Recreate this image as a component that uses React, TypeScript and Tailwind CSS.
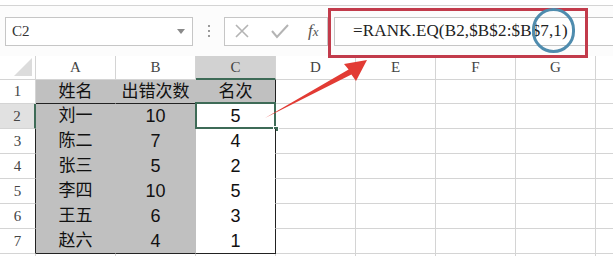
const ROWS = [
  ['姓名', '出错次数', '名次'],
  ['刘一', '10', '5'],
  ['陈二', '7', '4'],
  ['张三', '5', '2'],
  ['李四', '10', '5'],
  ['王五', '6', '3'],
  ['赵六', '4', '1'],
]

const COLS = ['A', 'B', 'C', 'D', 'E', 'F', 'G']

const serif = "font-['Liberation_Serif',serif]"
const cjk = "font-['Liberation_Sans','Noto_Sans_CJK_SC',sans-serif]"

function RowHeader({ n }: { n?: number }) {
  const selected = n === 2
  const edge = n !== undefined && n >= 3 && n <= 7
  return (
    <div
      className={`flex items-center justify-center border-b border-[#d4d4d4] text-[15px] text-[#444] ${serif} ${
        selected
          ? 'border-r-2 border-r-[#3e6b57] bg-[#e1e1e1]'
          : edge
            ? 'border-r border-r-[#222] bg-white'
            : 'border-r border-r-[#d4d4d4] bg-white'
      }`}
    >
      {n}
    </div>
  )
}

function DataCell({ row, col, text }: { row: number; col: number; text: string }) {
  const isText = row === 1 || col === 0
  const font = isText ? `${cjk} text-[17px]` : "font-['Liberation_Sans',sans-serif] text-[18px]"

  if (col === 2) {
    // rank column: white fill, dark outline on the right
    const bg = row === 1 ? 'bg-[#c0c0c0] border-b-[#c0c0c0]' : row === 7 ? 'bg-white border-b-[#222]' : 'bg-white border-b-white'
    return (
      <div className={`relative flex items-center justify-center border-r border-b border-r-[#222] text-[#111] ${bg} ${font}`}>
        {text}
        {row === 2 && (
          <>
            <div className="absolute -top-[2px] -left-[1px] -right-[1px] -bottom-[1px] border-2 border-[#3e6b57]" />
            <div className="absolute -right-[4px] -bottom-[4px] h-[6px] w-[6px] border border-white bg-[#3e6b57]" />
          </>
        )}
      </div>
    )
  }

  const bottom = row === 1 || row === 7 ? 'border-b-[#222]' : 'border-b-[#c0c0c0]'
  return (
    <div className={`flex items-center justify-center border-r border-b border-r-[#c0c0c0] bg-[#c0c0c0] text-[#111] ${bottom} ${font}`}>
      {text}
    </div>
  )
}

function EmptyCell({ last }: { last?: boolean }) {
  return <div className={`border-b border-[#d4d4d4] bg-white ${last ? '' : 'border-r'}`} />
}

function Toolbar() {
  return (
    <div className="flex h-[50px] items-center bg-[#fcfcfc] pl-[5px]">
      {/* name box */}
      <div className={`flex h-[29px] w-[188px] shrink-0 items-center justify-between border border-[#c6c6c6] bg-white pl-[6px] pr-[7px] text-[15px] text-[#333] ${serif}`}>
        <span>C2</span>
        <svg width="8" height="5" viewBox="0 0 8 5">
          <path d="M0 0h8L4 5z" fill="#8a8a8a" />
        </svg>
      </div>
      <div className="flex w-[31px] shrink-0 flex-col items-center gap-[3px]">
        <span className="h-[2px] w-[2px] bg-[#9a9a9a]" />
        <span className="h-[2px] w-[2px] bg-[#9a9a9a]" />
        <span className="h-[2px] w-[2px] bg-[#9a9a9a]" />
      </div>
      {/* cancel / enter / insert function */}
      <div className="flex h-[29px] w-[104px] shrink-0 items-center border border-[#c6c6c6] bg-white">
        <svg width="18" height="18" viewBox="0 0 18 18" className="ml-[8px]">
          <path d="M3 3l12 12M15 3L3 15" stroke="#b4b4b4" strokeWidth="1.6" />
        </svg>
        <svg width="20" height="18" viewBox="0 0 20 18" className="ml-[19px]">
          <path d="M2 9l5 6L18 3" stroke="#b4b4b4" strokeWidth="2" fill="none" />
        </svg>
        <span className={`ml-[18px] text-[17px] italic text-[#555] ${serif}`}>
          f<span className="text-[13px]">x</span>
        </span>
      </div>
      <div className={`ml-[6px] flex h-[29px] flex-1 items-center border border-r-0 border-[#c6c6c6] bg-white pl-[18px] text-[17px] tracking-[0.15px] text-[#222] ${serif}`}>
        =RANK.EQ(B2,$B$2:$B$7,1)
      </div>
    </div>
  )
}

function Sheet() {
  return (
    <div className="grid grid-cols-[36px_repeat(7,80px)_1fr] grid-rows-[24px_24px_repeat(7,25px)]">
      {/* column headers */}
      <div className="flex items-end justify-end border-r border-b border-[#d4d4d4] bg-white pr-[3px] pb-[3px]">
        <svg width="18" height="18" viewBox="0 0 18 18">
          <path d="M18 0v18H0z" fill="#dcdcdc" />
        </svg>
      </div>
      {COLS.map((c) => (
        <div
          key={c}
          className={`flex items-center justify-center border-r text-[15px] text-[#444] ${serif} ${
            c === 'C'
              ? 'border-b-2 border-r-[#d4d4d4] border-b-[#3e6b57] bg-[#d2d2d2]'
              : 'border-b border-[#d4d4d4] bg-white'
          }`}
        >
          {c}
        </div>
      ))}
      <div className="border-b border-[#d4d4d4] bg-white" />

      {ROWS.map((r, i) => (
        <div key={i} className="contents">
          <RowHeader n={i + 1} />
          {r.map((t, j) => (
            <DataCell key={j} row={i + 1} col={j} text={t} />
          ))}
          <EmptyCell />
          <EmptyCell />
          <EmptyCell />
          <EmptyCell />
          <EmptyCell last />
        </div>
      ))}
      <RowHeader />
      {Array.from({ length: 8 }).map((_, k) => (
        <EmptyCell key={k} last={k === 7} />
      ))}
    </div>
  )
}

export default function App() {
  return (
    <div className="relative h-[256px] w-[613px] overflow-hidden bg-white">
      <div className="h-[6px] border-b border-[#d4d4d4] bg-white" />
      <Toolbar />
      <Sheet />

      {/* annotations over the sheet */}
      <div className="pointer-events-none absolute left-[328px] top-[8px] h-[50px] w-[260px] border-[3px] border-[#c23b4b]" />
      <div className="pointer-events-none absolute left-[532px] top-[8px] h-[45px] w-[43px] rounded-full border-[3px] border-[#4f8cae]" />
      <svg className="pointer-events-none absolute left-0 top-0" width="613" height="256" viewBox="0 0 613 256">
        <path d="M265 118L348.6 69.4 344 64 367 60 356 81 351.4 74.6z" fill="#e23b34" />
      </svg>
    </div>
  )
}
